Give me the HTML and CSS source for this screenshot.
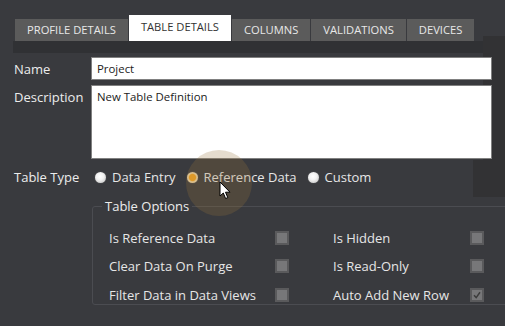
FILE: index.html
```html
<!DOCTYPE html>
<html>
<head>
<meta charset="utf-8">
<link rel="stylesheet" href="styles.css">
</head>
<body>
<div class="backdrop"></div>
<div class="backdrop2"></div>
<div class="page">
  <div class="tabs">
    <div class="tab">PROFILE DETAILS</div>
    <div class="tab active">TABLE DETAILS</div>
    <div class="tab">COLUMNS</div>
    <div class="tab">VALIDATIONS</div>
    <div class="tab">DEVICES</div>
  </div>
  <div class="strip"></div>
  <div class="form">
    <div class="row">
      <label class="lbl">Name</label>
      <div class="input">Project</div>
    </div>
    <div class="row top">
      <label class="lbl">Description</label>
      <div class="input area">New Table Definition</div>
    </div>
    <div class="row type">
      <label class="lbl">Table Type</label>
      <div class="radios">
        <span class="radio"><span class="dot"></span>Data Entry</span>
        <span class="radio on"><span class="dot"></span>Reference Data</span>
        <span class="radio"><span class="dot"></span>Custom</span>
      </div>
    </div>
    <fieldset class="group">
      <legend>Table Options</legend>
      <div class="grid">
        <div class="opt"><span>Is Reference Data</span><span class="cb"></span></div>
        <div class="opt"><span>Is Hidden</span><span class="cb"></span></div>
        <div class="opt"><span>Clear Data On Purge</span><span class="cb"></span></div>
        <div class="opt"><span>Is Read-Only</span><span class="cb"></span></div>
        <div class="opt"><span>Filter Data in Data Views</span><span class="cb"></span></div>
        <div class="opt"><span>Auto Add New Row</span><span class="cb checked"><svg viewBox="0 0 10 10" width="10" height="10"><path d="M2 5.2 L4.2 7.6 L8 2.2" fill="none" stroke="#3c3c3c" stroke-width="1.5"/></svg></span></div>
      </div>
    </fieldset>
  </div>
</div>
<div class="glow"></div>
<svg class="cursor" width="14" height="20" viewBox="0 0 14 20"><path d="M1 1 L1 15 L4.3 12 L6.6 17.5 L8.8 16.6 L6.5 11.2 L11 11.2 Z" fill="#fff" stroke="#000" stroke-width="1"/></svg>
</body>
</html>
```
FILE: styles.css
```css
html, body {
  margin: 0;
  padding: 0;
}
body {
  width: 505px;
  height: 326px;
  overflow: hidden;
  background: #393a3e;
  font-family: "Open Sans", "Noto Sans", sans-serif;
  color: #e6e6e6;
  position: relative;
}
.backdrop {
  position: absolute;
  left: 483px;
  top: 36px;
  width: 22px;
  height: 161px;
  background: #323234;
}
.backdrop2 {
  position: absolute;
  left: 473px;
  top: 160px;
  width: 12px;
  height: 37px;
  background: #323234;
}
.page {
  position: relative;
}
.tabs {
  display: flex;
  align-items: flex-end;
  padding: 16px 0 0 15px;
  height: 25px;
}
.tab {
  height: 22px;
  line-height: 22px;
  padding: 0 12px;
  background: #5b5b5b;
  color: #e8e8e8;
  font-size: 11.2px;
  margin-right: 1px;
  box-sizing: border-box;
}
.tab.active {
  height: 26px;
  line-height: 24px;
  background: #ffffff;
  color: #333;
}
.strip {
  margin-left: 13px;
  width: 470px;
  height: 12px;
  background: #303134;
}
.form {
  padding: 4px 0 0 14px;
}
.row {
  display: flex;
  align-items: center;
  margin-bottom: 5px;
}
.row.top {
  align-items: flex-start;
}
.lbl {
  width: 77px;
  font-size: 13px;
  color: #ececec;
}
.row.top .lbl {
  padding-top: 3px;
}
.input {
  width: 401px;
  height: 23px;
  box-sizing: border-box;
  background: #fff;
  border: 1px solid #808080;
  color: #222;
  font-size: 11.4px;
  padding: 3px 5px;
}
.input.area {
  height: 74px;
}
.row.type {
  margin-top: 9px;
}
.radios {
  display: flex;
  gap: 11px;
  font-size: 13px;
  padding-left: 4px;
}
.radio {
  display: flex;
  align-items: center;
  gap: 6px;
}
.dot {
  width: 11px;
  height: 11px;
  border-radius: 50%;
  background: radial-gradient(circle at 45% 40%, #ffffff 0, #f2f2f2 40%, #b8b8b8 100%);
  box-shadow: 0 0 1px #888;
}
.radio.on .dot {
  background: radial-gradient(circle, #f5a623 0, #f5a623 40%, #f2d9a8 55%, #d8c8a8 100%);
}
.group {
  margin: 11px 0 0 78px;
  padding: 0 0 0 16px;
  border: 1px solid #4b4c51;
  border-radius: 3px;
  width: 420px;
  height: 108px;
  box-sizing: border-box;
}
.group legend {
  font-size: 13px;
  padding: 0 3px;
  margin-left: -7px;
  color: #ececec;
}
.grid {
  display: grid;
  grid-template-columns: 180px 151px;
  column-gap: 44px;
  row-gap: 11.5px;
  margin-top: 14px;
}
.opt {
  display: flex;
  justify-content: space-between;
  align-items: center;
  font-size: 13px;
  height: 17px;
}
.cb {
  width: 14px;
  height: 14px;
  box-sizing: border-box;
  border: 2px solid #5a5a5c;
  background: #777779;
  display: flex;
  align-items: center;
  justify-content: center;
}
.glow {
  position: absolute;
  left: 186px;
  top: 150px;
  width: 66px;
  height: 66px;
  border-radius: 50%;
  background: rgba(150, 115, 60, 0.25);
}
.cursor {
  position: absolute;
  left: 219px;
  top: 181px;
}
```
